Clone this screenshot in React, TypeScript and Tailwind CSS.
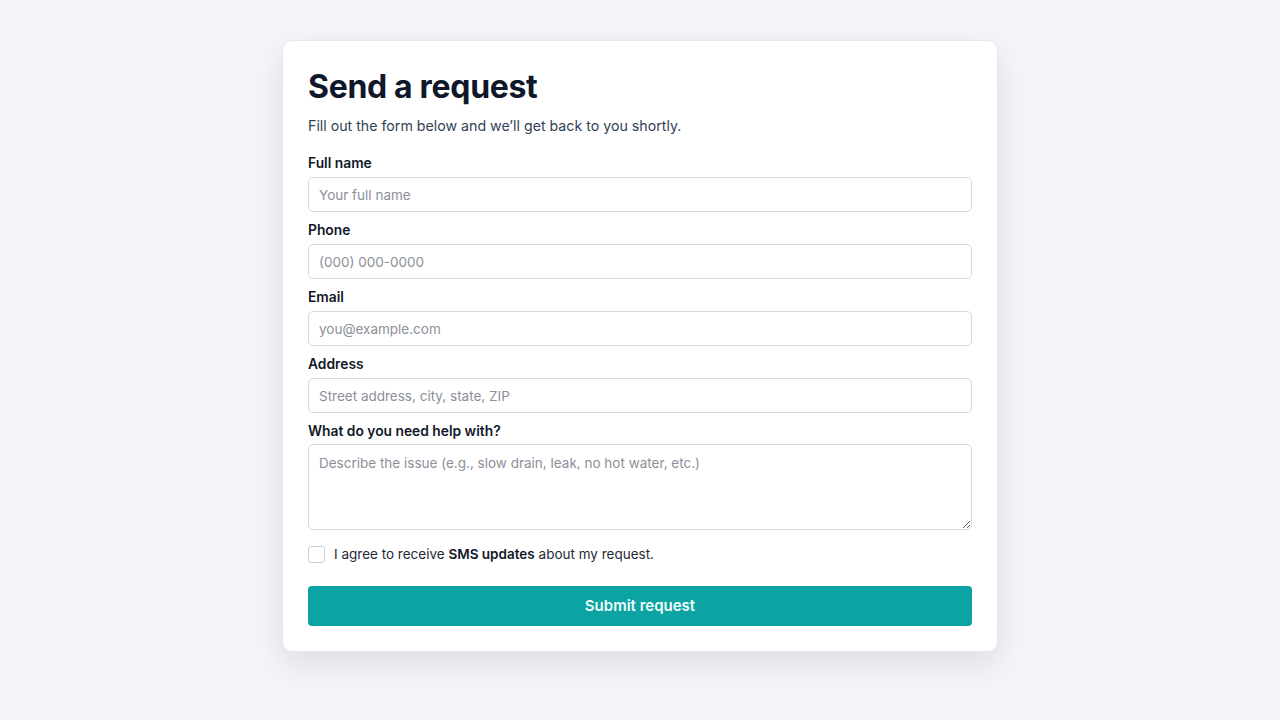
import { useState } from 'react';

const fields = [
  { label: 'Full name', placeholder: 'Your full name', type: 'text' },
  { label: 'Phone', placeholder: '(000) 000-0000', type: 'tel' },
  { label: 'Email', placeholder: 'you@example.com', type: 'email' },
  { label: 'Address', placeholder: 'Street address, city, state, ZIP', type: 'text' },
];

export default function App() {
  const [agree, setAgree] = useState(false);

  return (
    <div
      className="min-h-screen bg-[#f4f5f8] flex justify-center pt-10"
      style={{ fontFamily: 'Inter, "Noto Sans", sans-serif' }}
    >
      <div className="w-[716px] h-[612px] bg-white rounded-[10px] border border-[#e6e8ec] shadow-[0_12px_32px_rgba(15,23,42,0.10)] px-[25px] pt-[26px]">
        {/* Header */}
        <h1 className="text-[32px] leading-[40px] font-bold text-[#0f172a] tracking-[-0.01em]">
          Send a request
        </h1>
        <p className="mt-[9px] text-[14.2px] leading-5 text-[#334155]">
          Fill out the form below and we’ll get back to you shortly.
        </p>

        <form className="mt-[17px]" onSubmit={(e) => e.preventDefault()}>
          {fields.map((f) => (
            <div key={f.label} className="mb-2">
              <label className="block text-[13.8px] leading-5 font-semibold text-[#111827] mb-1">
                {f.label}
              </label>
              <input
                type={f.type}
                placeholder={f.placeholder}
                className="w-full h-[35px] px-[10px] rounded-[5px] border border-[#d7dade] text-[13.5px] text-[#111827] placeholder:text-[#8b9099] outline-none"
              />
            </div>
          ))}

          {/* Message */}
          <div>
            <label className="block text-[13.8px] leading-5 font-semibold text-[#111827] mb-[3px]">
              What do you need help with?
            </label>
            <textarea
              placeholder="Describe the issue (e.g., slow drain, leak, no hot water, etc.)"
              className="block w-full h-[86px] px-[10px] py-[8px] rounded-[5px] border border-[#d7dade] text-[13.5px] leading-5 text-[#111827] placeholder:text-[#8b9099] outline-none"
            />
          </div>

          {/* SMS consent */}
          <label className="mt-[14px] flex items-center gap-[9px] text-[13.5px] leading-5 text-[#1f2937] cursor-pointer">
            <input
              type="checkbox"
              checked={agree}
              onChange={() => setAgree(!agree)}
              className="appearance-none w-[17px] h-[17px] rounded-[3px] border border-[#c9cdd3] bg-white checked:bg-[#0ea5a4] shrink-0"
            />
            <span>
              I agree to receive <strong className="font-semibold text-[#111827]">SMS updates</strong> about my request.
            </span>
          </label>

          <button
            type="submit"
            className="mt-[22px] w-full h-10 rounded-[4px] bg-[#0ca3a3] text-[#f0fdfc] text-[15px] font-semibold"
          >
            Submit request
          </button>
        </form>
      </div>
    </div>
  );
}
